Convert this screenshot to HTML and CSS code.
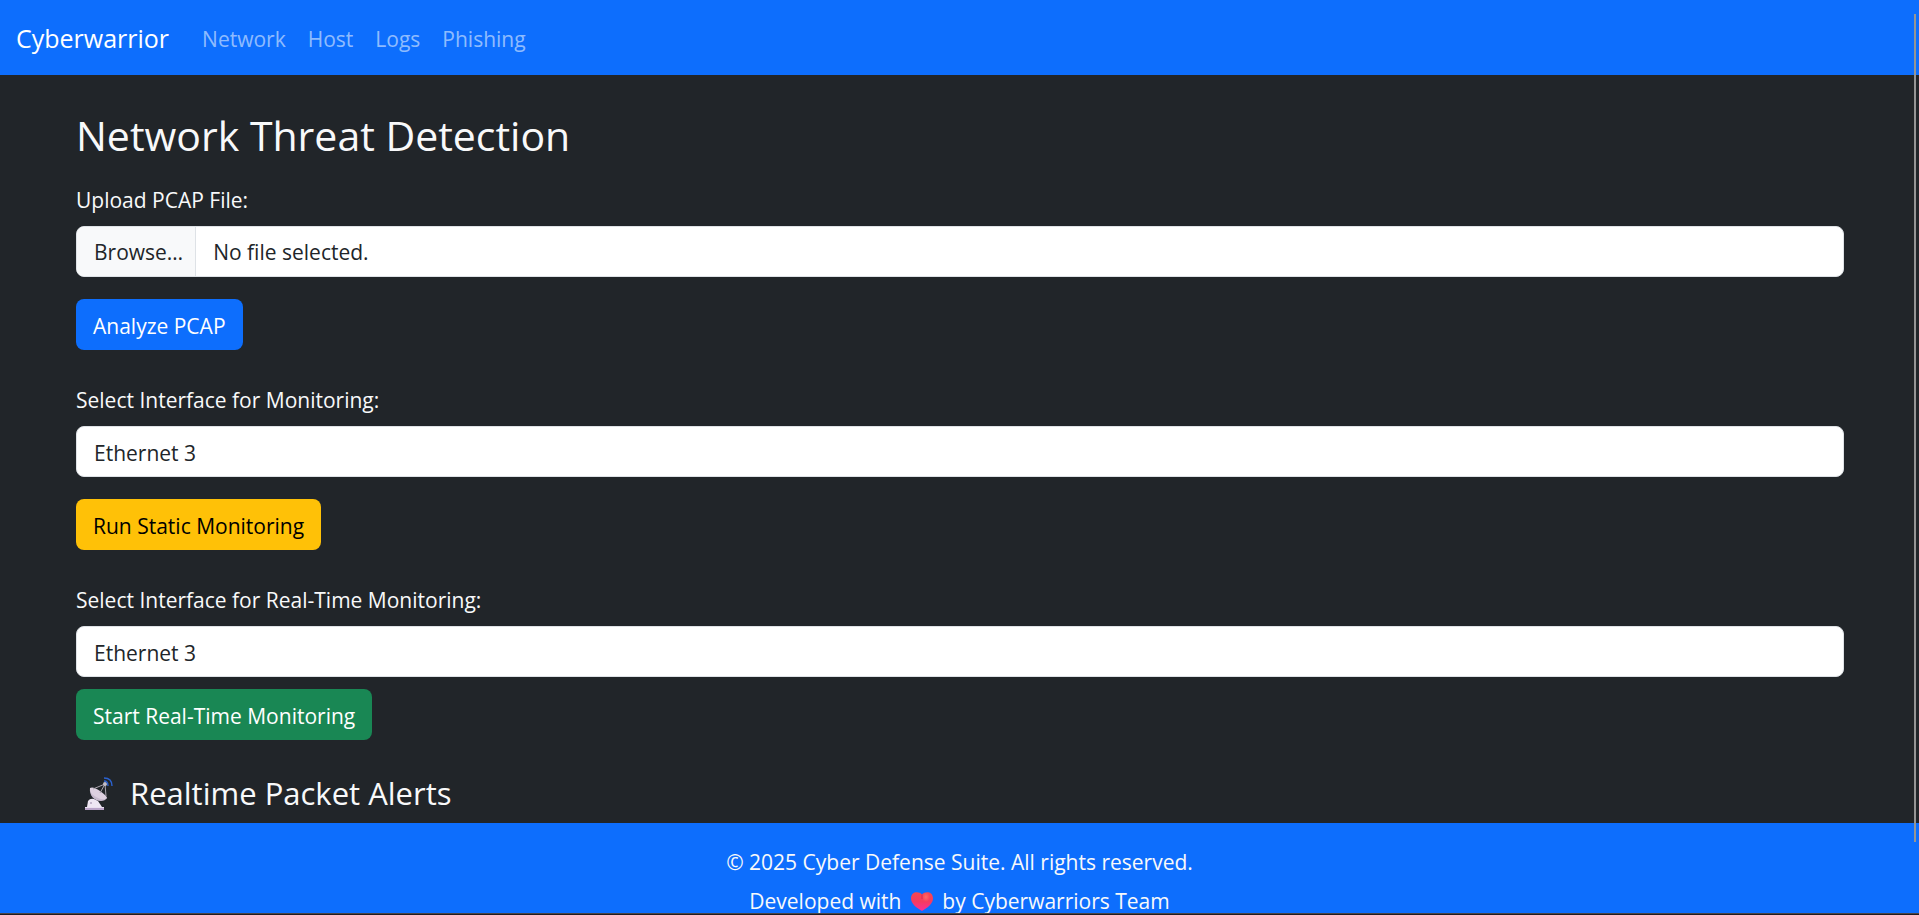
FILE: index.html
```html
<!DOCTYPE html>
<html lang="en">
<head>
<meta charset="utf-8">
<meta name="viewport" content="width=device-width, initial-scale=1">
<title>Network Threat Detection</title>
<link rel="stylesheet" href="styles.css">
</head>
<body>
<nav class="navbar">
  <a class="brand" href="#">Cyberwarrior</a>
  <a class="nav-link" href="#">Network</a>
  <a class="nav-link" href="#">Host</a>
  <a class="nav-link" href="#">Logs</a>
  <a class="nav-link" href="#">Phishing</a>
</nav>

<main class="content">
  <h1 class="title">Network Threat Detection</h1>

  <form class="form">
    <label class="form-label" for="pcap">Upload PCAP File:</label>
    <div class="control file-control">
      <span class="file-button">Browse…</span>
      <span class="file-name">No file selected.</span>
      <input class="file-input" type="file" id="pcap">
    </div>
    <button class="btn btn-primary" type="button">Analyze PCAP</button>
  </form>

  <form class="form">
    <label class="form-label" for="static-interface">Select Interface for Monitoring:</label>
    <select class="control select" id="static-interface"><option>Ethernet 3</option></select>
    <button class="btn btn-warning" type="button">Run Static Monitoring</button>
  </form>

  <form class="form form-tight">
    <label class="form-label" for="live-interface">Select Interface for Real-Time Monitoring:</label>
    <select class="control select" id="live-interface"><option>Ethernet 3</option></select>
    <button class="btn btn-success" type="button">Start Real-Time Monitoring</button>
  </form>

  <h2 class="subtitle">
    <svg class="dish" viewBox="0 0 28 33" aria-hidden="true">
      <path d="M2 30 3 24Q5 21 9 22L13 24 17 30Z" fill="#eee6f3"/>
      <path d="M0 30H19V33H0Z" fill="#b9a3c8"/>
      <path d="M0 30H19V31H0Z" fill="#e9dff0"/>
      <circle cx="6" cy="26" r="1" fill="#b5a6c0"/>
      <path d="M5 11C4 18 9 24 16 24Q20 24 22 21Z" fill="#c9bbcf"/>
      <path d="M5 11Q8 9 15 14T22 21Q18 24 11 20T5 11Z" fill="#ddd0e0"/>
      <path d="M8 12 20 7 21 19M20 7 15 16" fill="none" stroke="#a9a3ad" stroke-width="1"/>
      <circle cx="20" cy="7" r="2" fill="#c3bdc6"/>
      <path d="M19 4Q23 4 23 9M19 1Q27 1 27 9" fill="none" stroke="#2b62cf" stroke-width="1.4"/>
    </svg>
    <span>Realtime Packet Alerts</span>
  </h2>
</main>

<footer class="footer">
  <p class="footer-line">© 2025 Cyber Defense Suite. All rights reserved.</p>
  <p class="footer-line">Developed with
    <svg class="heart" viewBox="0 0 22 19" role="img" aria-label="love">
      <defs>
        <linearGradient id="heart-fill" x1="0" y1="0" x2="0" y2="1">
          <stop offset="0" stop-color="#f8474f"/>
          <stop offset=".5" stop-color="#f63b60"/>
          <stop offset="1" stop-color="#fa2f9b"/>
        </linearGradient>
        <radialGradient id="heart-shine"><stop offset="0" stop-color="#ff6a66"/><stop offset="1" stop-color="#ff6a66" stop-opacity="0"/></radialGradient>
      </defs>
      <path d="M11 2.500C8-1 0-1 0 6.500C0 12 6 16 11 19C16 16 22 12 22 6.500C22-1 14-1 11 2.500Z" fill="url(#heart-fill)"/>
      <ellipse cx="15" cy="5" rx="4" ry="5" fill="url(#heart-shine)"/>
      <path d="M11 2.500V7" stroke="#d92f50" stroke-width="1"/>
    </svg>
    by Cyberwarriors Team</p>
</footer>

<div class="scroll-thumb"></div>
<div class="window-edge"></div>
</body>
</html>
```
FILE: styles.css
```css
* { box-sizing: border-box; }

html { height: 100%; overflow: hidden; }

body {
  margin: 0;
  height: 100%;
  overflow: hidden;
  background: #212529;
  color: #f8f9fa;
  font-family: "Open Sans", "Noto Sans", sans-serif;
  font-size: 21px;
  line-height: 32px;
}

.navbar {
  display: flex;
  align-items: center;
  gap: 22px;
  padding: 18px 16px 17px;
  background: #0d6efd;
}

.brand {
  margin-right: 11px;
  color: #fff;
  font-size: 25px;
  line-height: 40px;
  text-decoration: none;
}

.nav-link {
  padding-top: 1px;
  color: rgba(255, 255, 255, .55);
  text-decoration: none;
}

.content { padding: 35px 75px 9px 76px; }

.title {
  margin: 0 0 22px;
  font-size: 41px;
  font-weight: 400;
  line-height: 51px;
}

.form {
  display: flex;
  flex-direction: column;
  align-items: flex-start;
  margin-bottom: 33px;
}

.form-label {
  padding-top: 1px;
  margin-bottom: 10px;
}

.control {
  width: 100%;
  height: 51px;
  margin-bottom: 22px;
  border: 1px solid #dee2e6;
  border-radius: 8px;
  background: #fff;
  color: #212529;
}

.form-tight .control { margin-bottom: 12px; }

.file-control {
  position: relative;
  display: flex;
  align-items: stretch;
  overflow: hidden;
  line-height: 51px;
}

.file-button {
  padding: 0 12px 0 17px;
  border-right: 1px solid #dee2e6;
  background: #f8f9fa;
}

.file-name { padding-left: 17px; }

.file-input {
  position: absolute;
  inset: 0;
  width: 100%;
  opacity: 0;
}

.select {
  appearance: none;
  padding: 2px 17px 0;
  font: inherit;
}

.btn {
  height: 51px;
  padding: 2px 17px 0;
  border: 0;
  border-radius: 8px;
  font: inherit;
}

.btn-primary { background: #0d6efd; color: #fff; }
.btn-warning { background: #ffc107; color: #000; }
.btn-success { background: #198754; color: #fff; }

.subtitle {
  display: flex;
  align-items: center;
  gap: 17px;
  margin: 0;
  padding-left: 9px;
  font-size: 31px;
  font-weight: 400;
  line-height: 41px;
}

.dish { width: 28px; height: 33px; }

.footer {
  padding: 23px 16px;
  background: #0d6efd;
  text-align: center;
}

.footer-line { margin: 0 0 7px; }

.heart {
  width: 22px;
  height: 19px;
  margin: 0 4px;
  vertical-align: -2px;
}

.scroll-thumb {
  position: fixed;
  top: 14px;
  right: 3px;
  bottom: 73px;
  width: 2px;
  background: #959595;
}

.window-edge {
  position: fixed;
  right: 0;
  bottom: 0;
  left: 0;
  height: 2px;
  border-top: 1px solid #4a4548;
  background: #211c20;
}
```
